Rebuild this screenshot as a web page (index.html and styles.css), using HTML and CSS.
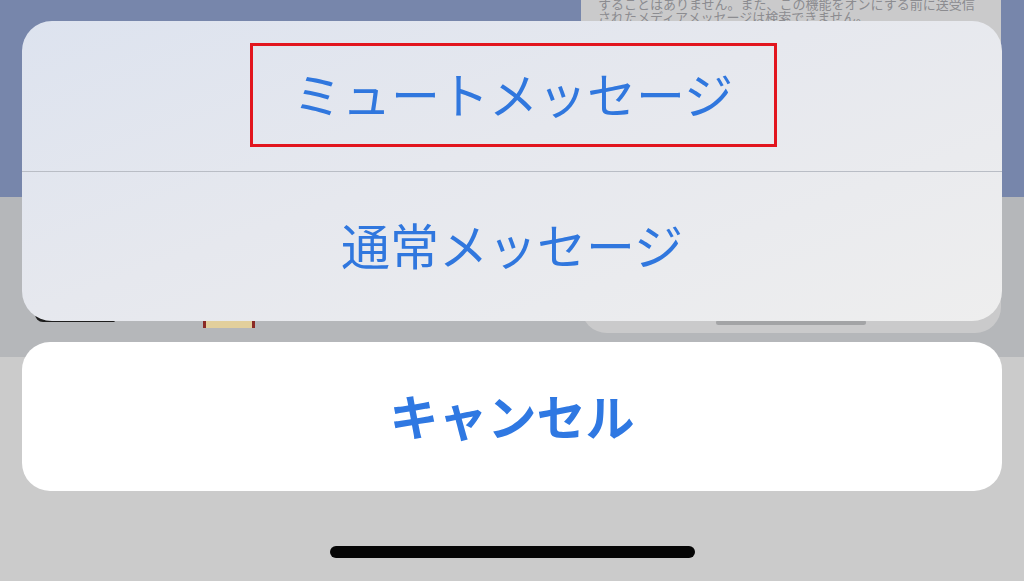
FILE: index.html
```html
<!DOCTYPE html>
<html lang="ja">
<head>
<meta charset="utf-8">
<title>Action sheet</title>
<link rel="stylesheet" href="styles.css">
</head>
<body>
<div class="screen">
  <div class="backdrop">
    <div class="bg-top"></div>
    <div class="bg-mid"></div>
    <div class="bg-card">
      <p class="bg-text">することはありません。また、この機能をオンにする前に送受信</p>
      <p class="bg-text">されたメディアメッセージは検索できません。</p>
      <div class="bg-handle"></div>
    </div>
    <div class="bg-dark"></div>
    <div class="bg-tan"></div>
  </div>

  <div class="sheet">
    <div class="group">
      <div class="row">
        <span class="highlight"><span class="label">ミュートメッセージ</span></span>
      </div>
      <div class="divider"></div>
      <div class="row">
        <span class="label">通常メッセージ</span>
      </div>
    </div>
    <div class="cancel">
      <span class="label bold">キャンセル</span>
    </div>
  </div>

  <div class="home-bar"><div class="home-indicator"></div></div>
</div>
</body>
</html>
```

FILE: styles.css
```css
html, body {
  margin: 0;
  padding: 0;
}
body {
  width: 1024px;
  height: 581px;
  overflow: hidden;
  background: #cbcbcb;
  font-family: "Noto Sans CJK JP", "Noto Sans", sans-serif;
}
.screen {
  position: relative;
  width: 1024px;
  height: 581px;
  display: flex;
  flex-direction: column;
}
.backdrop {
  position: absolute;
  inset: 0;
  z-index: 0;
}
.bg-top {
  position: absolute;
  left: 0;
  top: 0;
  width: 1024px;
  height: 197px;
  background: #7786ab;
}
.bg-mid {
  position: absolute;
  left: 0;
  top: 197px;
  width: 1024px;
  height: 160px;
  background: #b5b7ba;
}
.bg-card {
  position: absolute;
  left: 581px;
  top: -20px;
  width: 420px;
  height: 353px;
  background: #cacacb;
  border-radius: 0 0 26px 26px;
  box-sizing: border-box;
  padding: 17px 0 0 17px;
}
.bg-text {
  margin: 0;
  font-size: 13px;
  line-height: 13px;
  color: #8c8c90;
  white-space: nowrap;
}
.bg-handle {
  position: absolute;
  left: 135px;
  top: 340px;
  width: 150px;
  height: 5px;
  border-radius: 3px;
  background: #a3a4a6;
}
.bg-dark {
  position: absolute;
  left: 35px;
  top: 314px;
  width: 80px;
  height: 8px;
  background: #1e1e1e;
  border-radius: 0 0 2px 10px;
}
.bg-tan {
  position: absolute;
  left: 203px;
  top: 321px;
  width: 52px;
  height: 7px;
  background: #e2cf9c;
  border-left: 3px solid #8a2a25;
  border-right: 3px solid #8a2a25;
  box-sizing: border-box;
}
.sheet {
  position: relative;
  z-index: 1;
  display: flex;
  flex-direction: column;
  gap: 21px;
  padding: 21px 22px 0;
}
.group {
  height: 300px;
  border-radius: 30px;
  background: linear-gradient(160deg, #dde3ef 0%, #e6e8ee 45%, #eeeeee 100%);
  display: flex;
  flex-direction: column;
  overflow: hidden;
}
.row {
  flex: 1;
  display: flex;
  align-items: center;
  justify-content: center;
}
.divider {
  height: 1px;
  background: #b9bdc5;
}
.label {
  font-size: 49px;
  line-height: 1;
  color: #3077de;
  font-weight: 400;
  white-space: nowrap;
  margin-top: -5px;
}
.label.bold {
  font-weight: 700;
  color: #2f78e2;
}
.highlight {
  width: 527px;
  height: 104px;
  box-sizing: border-box;
  border: 3px solid #e2151e;
  display: flex;
  align-items: center;
  justify-content: center;
  margin-left: 2px;
  margin-top: -1px;
}
.cancel {
  height: 149px;
  border-radius: 28px;
  background: #ffffff;
  display: flex;
  align-items: center;
  justify-content: center;
}
.home-bar {
  position: relative;
  z-index: 1;
  display: flex;
  justify-content: center;
  padding-top: 55px;
}
.home-indicator {
  width: 365px;
  height: 12px;
  border-radius: 6px;
  background: #050505;
  margin-left: 1px;
}
```
